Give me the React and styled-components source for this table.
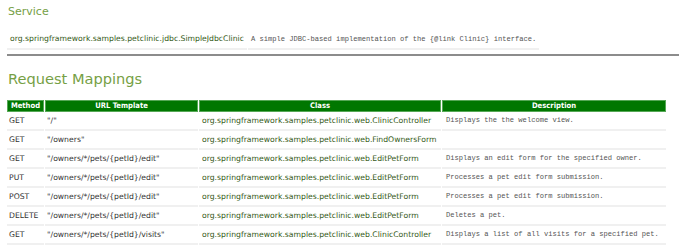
import React from "react";
import styled, { createGlobalStyle } from "styled-components";

const GlobalStyle = createGlobalStyle`
  html, body {
    margin: 0;
    padding: 0;
    background: #fff;
    overflow: hidden;
  }
`;

const Page = styled.div`
  width: 679px;
  height: 246px;
  overflow: hidden;
  padding: 0 0 0 7px;
  box-sizing: border-box;
  font-family: "DejaVu Sans", Verdana, sans-serif;
`;

const Heading = styled.h2`
  margin: 0;
  color: #76a045;
  font-weight: normal;
  font-size: ${(p) => p.size}px;
  line-height: 1;
  padding-top: ${(p) => p.top}px;
  padding-left: 1px;
`;

const Table = styled.table`
  border-collapse: separate;
  border-spacing: 1px 0;
  margin-left: -1px;
  margin-top: ${(p) => p.top}px;
  table-layout: fixed;
`;

const ServiceCell = styled.td`
  height: 19px;
  padding: 0 3px;
  border-bottom: 2px solid #f0f0f0;
  font-family: ${(p) => (p.mono ? '"Liberation Mono", "Courier New", monospace' : '"DejaVu Sans", Verdana, sans-serif')};
  font-size: ${(p) => (p.mono ? "7.1px" : "7.7px")};
  color: ${(p) => (p.mono ? "#555" : "#355a18")};
  white-space: nowrap;
`;

const Rule = styled.hr`
  margin: 4px 0 0 0;
  border: 0;
  border-top: 2px solid #8c8c8c;
  width: 700px;
`;

const Head = styled.th`
  box-sizing: border-box;
  height: 12px;
  padding: 0 2px;
  background: #007700;
  border: 1px solid #56a856;
  color: #fff;
  font-family: "DejaVu Sans Condensed", "DejaVu Sans", Verdana, sans-serif;
  font-stretch: condensed;
  font-size: 7.6px;
  font-weight: bold;
  text-align: center;
  width: ${(p) => p.w}px;
  white-space: nowrap;
`;

const Cell = styled.td`
  height: 17px;
  padding: 0 2px;
  border-bottom: 2px solid #f0f0f0;
  white-space: nowrap;
  overflow: hidden;
  font-family: ${(p) => (p.kind === "desc" ? '"Liberation Mono", "Courier New", monospace' : '"DejaVu Sans", Verdana, sans-serif')};
  font-size: ${(p) => (p.kind === "desc" ? "7.1px" : "7.7px")};
  color: ${(p) => (p.kind === "cls" ? "#355a18" : p.kind === "desc" ? "#555" : "#333")};
  padding-left: ${(p) => (p.kind === "desc" ? 4 : p.kind === "cls" ? 3 : 2)}px;
`;

const mappings = [
  ["GET", '"/"', "org.springframework.samples.petclinic.web.ClinicController", "Displays the the welcome view."],
  ["GET", '"/owners"', "org.springframework.samples.petclinic.web.FindOwnersForm", ""],
  ["GET", '"/owners/*/pets/{petId}/edit"', "org.springframework.samples.petclinic.web.EditPetForm", "Displays an edit form for the specified owner."],
  ["PUT", '"/owners/*/pets/{petId}/edit"', "org.springframework.samples.petclinic.web.EditPetForm", "Processes a pet edit form submission."],
  ["POST", '"/owners/*/pets/{petId}/edit"', "org.springframework.samples.petclinic.web.EditPetForm", "Processes a pet edit form submission."],
  ["DELETE", '"/owners/*/pets/{petId}/edit"', "org.springframework.samples.petclinic.web.EditPetForm", "Deletes a pet."],
  ["GET", '"/owners/*/pets/{petId}/visits"', "org.springframework.samples.petclinic.web.ClinicController", "Displays a list of all visits for a specified pet."],
];

const App = () => {
  return (
    <Page>
      <GlobalStyle />
      <Heading size={11} top={6}>Service</Heading>
      <Table top={12} style={{ tableLayout: "auto" }}>
        <tbody>
          <tr>
            <ServiceCell>org.springframework.samples.petclinic.jdbc.SimpleJdbcClinic</ServiceCell>
            <ServiceCell mono>A simple JDBC-based implementation of the {"{@link Clinic}"} interface.</ServiceCell>
          </tr>
        </tbody>
      </Table>
      <Rule />
      <Heading size={14.6} top={16}>Request Mappings</Heading>
      <Table top={13}>
        <thead>
          <tr>
            <Head w={37}>Method</Head>
            <Head w={153}>URL Template</Head>
            <Head w={242}>Class</Head>
            <Head w={224}>Description</Head>
          </tr>
        </thead>
        <tbody>
          {mappings.map((m, i) => (
            <tr key={i}>
              <Cell>{m[0]}</Cell>
              <Cell>{m[1]}</Cell>
              <Cell kind="cls">{m[2]}</Cell>
              <Cell kind="desc">{m[3]}</Cell>
            </tr>
          ))}
        </tbody>
      </Table>
    </Page>
  );
};

export default App;
